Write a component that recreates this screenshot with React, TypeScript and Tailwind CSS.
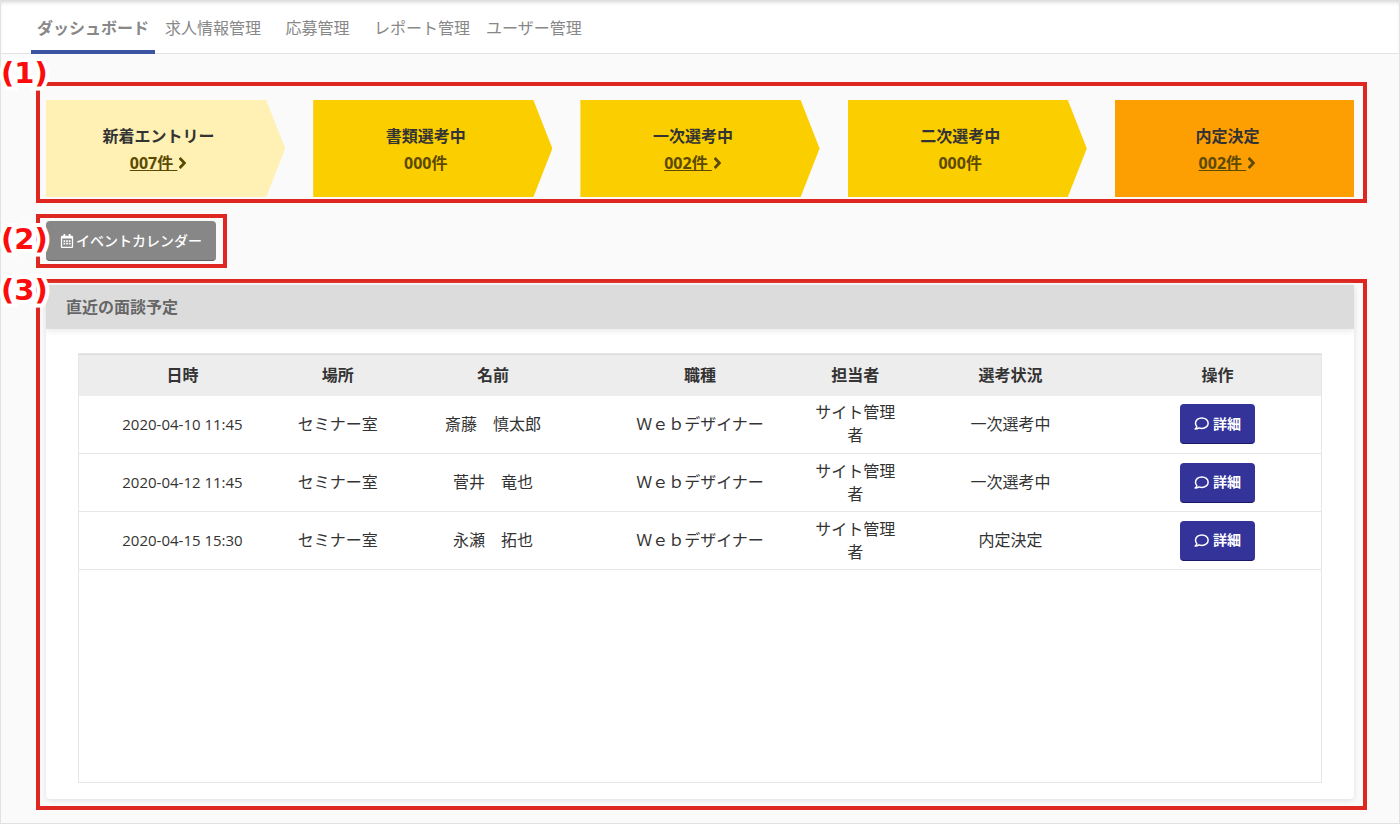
import React, { useState } from 'react';
import { FaAngleRight, FaRegCalendarAlt } from 'react-icons/fa';

const tabs = ['ダッシュボード', '求人情報管理', '応募管理', 'レポート管理', 'ユーザー管理'];

const steps = [
    { title: '新着エントリー', count: '007件', link: true, color: 'bg-[#fff0b3]' },
    { title: '書類選考中', count: '000件', link: false, color: 'bg-[#fbce00]' },
    { title: '一次選考中', count: '002件', link: true, color: 'bg-[#fbce00]' },
    { title: '二次選考中', count: '000件', link: false, color: 'bg-[#fbce00]' },
    { title: '内定決定', count: '002件', link: true, color: 'bg-[#fd9f02]' },
];

const columns = [
    { label: '日時', width: 'w-2/12' },
    { label: '場所', width: 'w-1/12' },
    { label: '名前', width: 'w-2/12' },
    { label: '職種', width: 'w-2/12' },
    { label: '担当者', width: 'w-1/12' },
    { label: '選考状況', width: 'w-2/12' },
    { label: '操作', width: 'w-2/12' },
];

const interviews = [
    { date: '2020-04-10 11:45', place: 'セミナー室', name: '斎藤　慎太郎', job: 'Ｗｅｂデザイナー', staff: 'サイト管理者', status: '一次選考中' },
    { date: '2020-04-12 11:45', place: 'セミナー室', name: '菅井　竜也', job: 'Ｗｅｂデザイナー', staff: 'サイト管理者', status: '一次選考中' },
    { date: '2020-04-15 15:30', place: 'セミナー室', name: '永瀬　拓也', job: 'Ｗｅｂデザイナー', staff: 'サイト管理者', status: '内定決定' },
];

// numbered label on the left edge of a red frame
function Marker({ text, className }: { text: string; className: string }) {
    return (
        <span className={`absolute -left-[39px] z-10 font-['DejaVu_Sans',sans-serif] text-[29px] leading-[38px] font-bold text-[#fb0d0d] [-webkit-text-stroke:8px_white] [paint-order:stroke_fill] ${className}`}>
            {text}
        </span>
    );
}

function CommentIcon() {
    return (
        <svg width="15" height="15" viewBox="0 0 14 14" fill="none" stroke="currentColor" strokeWidth="1.4" strokeLinejoin="round">
            <path d="M1 12.2c1-.6 1.6-1.4 1.6-2.4C1.6 8.9 1.4 7.7 1.4 6.7c0-2.8 2.6-4.9 5.9-4.9s5.9 2.1 5.9 4.9-2.6 4.9-5.9 4.9c-1 0-1.9-.2-2.7-.5-.9.7-2.2 1.1-3.6 1.1z" />
        </svg>
    );
}

export default function App() {
    const [active, setActive] = useState(0);

    return (
        <div className="min-h-screen border border-t-0 border-[#e2e2e2] bg-[#fafafa] font-['Open_Sans','Noto_Sans_CJK_JP',sans-serif] text-base text-[#333]">
            <nav className="flex h-[54px] gap-1 border-b border-[#e4e4e4] bg-white pl-[30px] shadow-[inset_0_4px_4px_-2px_#d4d4d4]">
                {tabs.map((tab, i) => (
                    <a
                        key={tab}
                        href="#"
                        onClick={() => setActive(i)}
                        className={`h-[54px] min-w-[93px] border-b-4 px-1.5 pt-4 text-center leading-6 whitespace-nowrap ${i === active ? 'border-[#3b53a3] font-bold text-[#888]' : 'border-transparent text-[#888]'}`}>
                        {tab}
                    </a>
                ))}
            </nav>

            <main className="flex flex-col pt-7 pr-8 pb-3 pl-[35px]">
                <section className="relative border-4 border-[#dd2720] pt-3.5 pr-[9px] pb-0.5 pl-1.5">
                    <Marker text="(1)" className="-top-8" />
                    <ul className="grid grid-cols-5 gap-7">
                        {steps.map((step, i) => (
                            <li
                                key={step.title}
                                className={`flex h-[97px] flex-col items-center justify-center pt-0.5 pr-3.5 font-bold ${step.color} ${i < steps.length - 1 ? '[clip-path:polygon(0_0,calc(100%-19px)_0,100%_50%,calc(100%-19px)_100%,0_100%)]' : ''}`}>
                                <p className="leading-[27px]">{step.title}</p>
                                {step.link ? (
                                    <a href="#" className="flex items-center gap-px leading-[27px] text-[#5c4a00]">
                                        <span className="whitespace-pre underline">{step.count + ' '}</span>
                                        <FaAngleRight className="h-[18px] w-[9px]" />
                                    </a>
                                ) : (
                                    <p className="leading-[27px] text-[#5c4a00]">{step.count}</p>
                                )}
                            </li>
                        ))}
                    </ul>
                </section>

                <section className="relative mt-[11px] self-start border-4 border-[#dd2720] py-[3px] pr-[7px] pl-1.5">
                    <Marker text="(2)" className="top-0.5" />
                    <button className="flex h-10 items-center gap-0.5 rounded border-b border-[#5f5f5f] bg-[#878787] px-3.5 text-sm font-medium text-white">
                        <FaRegCalendarAlt size={14} />
                        イベントカレンダー
                    </button>
                </section>

                <section className="relative mt-[11px] border-4 border-[#dd2720] pt-0.5 pr-[9px] pb-[7px] pl-1.5">
                    <Marker text="(3)" className="-top-3" />
                    <div className="rounded bg-white shadow-[0_1px_5px_#ddd]">
                        <h2 className="bg-[#dcdcdc] px-5 py-2.5 text-base leading-6 font-bold text-[#666] shadow-[0_3px_5px_#eee]">
                            直近の面談予定
                        </h2>
                        <div className="px-8 pt-6 pb-4">
                            <div className="min-h-[430px] border border-[#e6e6e6]">
                                <table className="w-full table-fixed border-collapse text-center">
                                    <thead>
                                        <tr className="border-t border-[#ddd] bg-[#ededed]">
                                            {columns.map((col) => (
                                                <th key={col.label} className={`h-[41px] p-0 font-bold ${col.width}`}>{col.label}</th>
                                            ))}
                                        </tr>
                                    </thead>
                                    <tbody>
                                        {interviews.map((row) => (
                                            <tr key={row.date} className="h-[58px] border-b border-[#e6e6e6] leading-[23px]">
                                                <td className="px-2 text-[15px]">{row.date}</td>
                                                <td className="px-2">{row.place}</td>
                                                <td className="px-2">{row.name}</td>
                                                <td className="px-2">{row.job}</td>
                                                <td className="px-2">{row.staff}</td>
                                                <td className="px-2">{row.status}</td>
                                                <td className="px-2">
                                                    <button className="inline-flex h-10 items-center gap-1 rounded border-b border-[#1a1a66] bg-[#333399] px-3.5 align-middle text-sm font-bold text-white">
                                                        <CommentIcon />
                                                        詳細
                                                    </button>
                                                </td>
                                            </tr>
                                        ))}
                                    </tbody>
                                </table>
                            </div>
                        </div>
                    </div>
                </section>
            </main>
        </div>
    );
}
